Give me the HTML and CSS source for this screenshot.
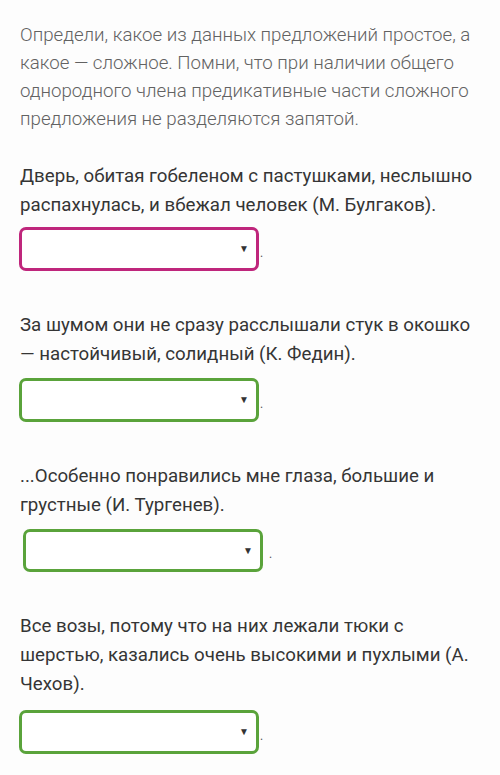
FILE: index.html
```html
<!DOCTYPE html>
<html lang="ru">
<head>
<meta charset="utf-8">
<link rel="stylesheet" href="styles.css">
</head>
<body>
<div class="page">
  <p class="intro">Определи, какое из данных предложений простое, а<br>какое — сложное. Помни, что при наличии общего<br>однородного члена предикативные части сложного<br>предложения не разделяются запятой.</p>

  <div class="task">
    <p class="sentence">Дверь, обитая гобеленом с пастушками, неслышно<br>распахнулась, и вбежал человек (М. Булгаков).</p>
    <div class="answer tight"><div class="select pink"><span class="arrow">▼</span></div><span class="dot">.</span></div>
  </div>

  <div class="task">
    <p class="sentence">За шумом они не сразу расслышали стук в окошко<br>— настойчивый, солидный (К. Федин).</p>
    <div class="answer"><div class="select green"><span class="arrow">▼</span></div><span class="dot">.</span></div>
  </div>

  <div class="task">
    <p class="sentence">...Особенно понравились мне глаза, большие и<br>грустные (И. Тургенев).</p>
    <div class="answer shifted"><div class="select green short"><span class="arrow">▼</span></div><span class="dot wide">.</span></div>
  </div>

  <div class="task">
    <p class="sentence">Все возы, потому что на них лежали тюки с<br>шерстью, казались очень высокими и пухлыми (А.<br>Чехов).</p>
    <div class="answer loose"><div class="select green"><span class="arrow">▼</span></div><span class="dot">.</span></div>
  </div>
</div>
</body>
</html>
```
FILE: styles.css
```css
html, body {
  margin: 0;
  padding: 0;
  background: #fdfdfd;
  overflow: hidden;
}
.page {
  padding: 21px 20px 0 20px;
  font-family: Roboto, "Noto Sans", sans-serif;
  font-size: 18.7px;
  line-height: 29px;
}
p {
  margin: 0;
  white-space: nowrap;
}
.intro {
  font-weight: 300;
  color: #626262;
  line-height: 28px;
  margin-bottom: 29px;
}
.task {
  margin-bottom: 40px;
}
.sentence {
  color: #353535;
}
.answer {
  display: flex;
  align-items: center;
  margin-top: 9px;
  margin-left: -1px;
}
.answer.tight {
  margin-top: 7px;
}
.answer.loose {
  margin-top: 11px;
}
.answer.shifted {
  margin-left: 3px;
}
.select {
  box-sizing: border-box;
  width: 240px;
  height: 44px;
  border: 3px solid #bf267c;
  border-radius: 7px;
  background: #fff;
  display: flex;
  align-items: center;
  justify-content: flex-end;
  padding-right: 7px;
}
.select.green {
  border-color: #5aa33b;
}
.select.short {
  height: 43px;
}
.arrow {
  font-size: 10px;
  color: #333;
  line-height: 1;
}
.dot {
  font-size: 12px;
  color: #555;
  padding-left: 1px;
  margin-top: 8px;
}
.dot.wide {
  padding-left: 6px;
}
```
